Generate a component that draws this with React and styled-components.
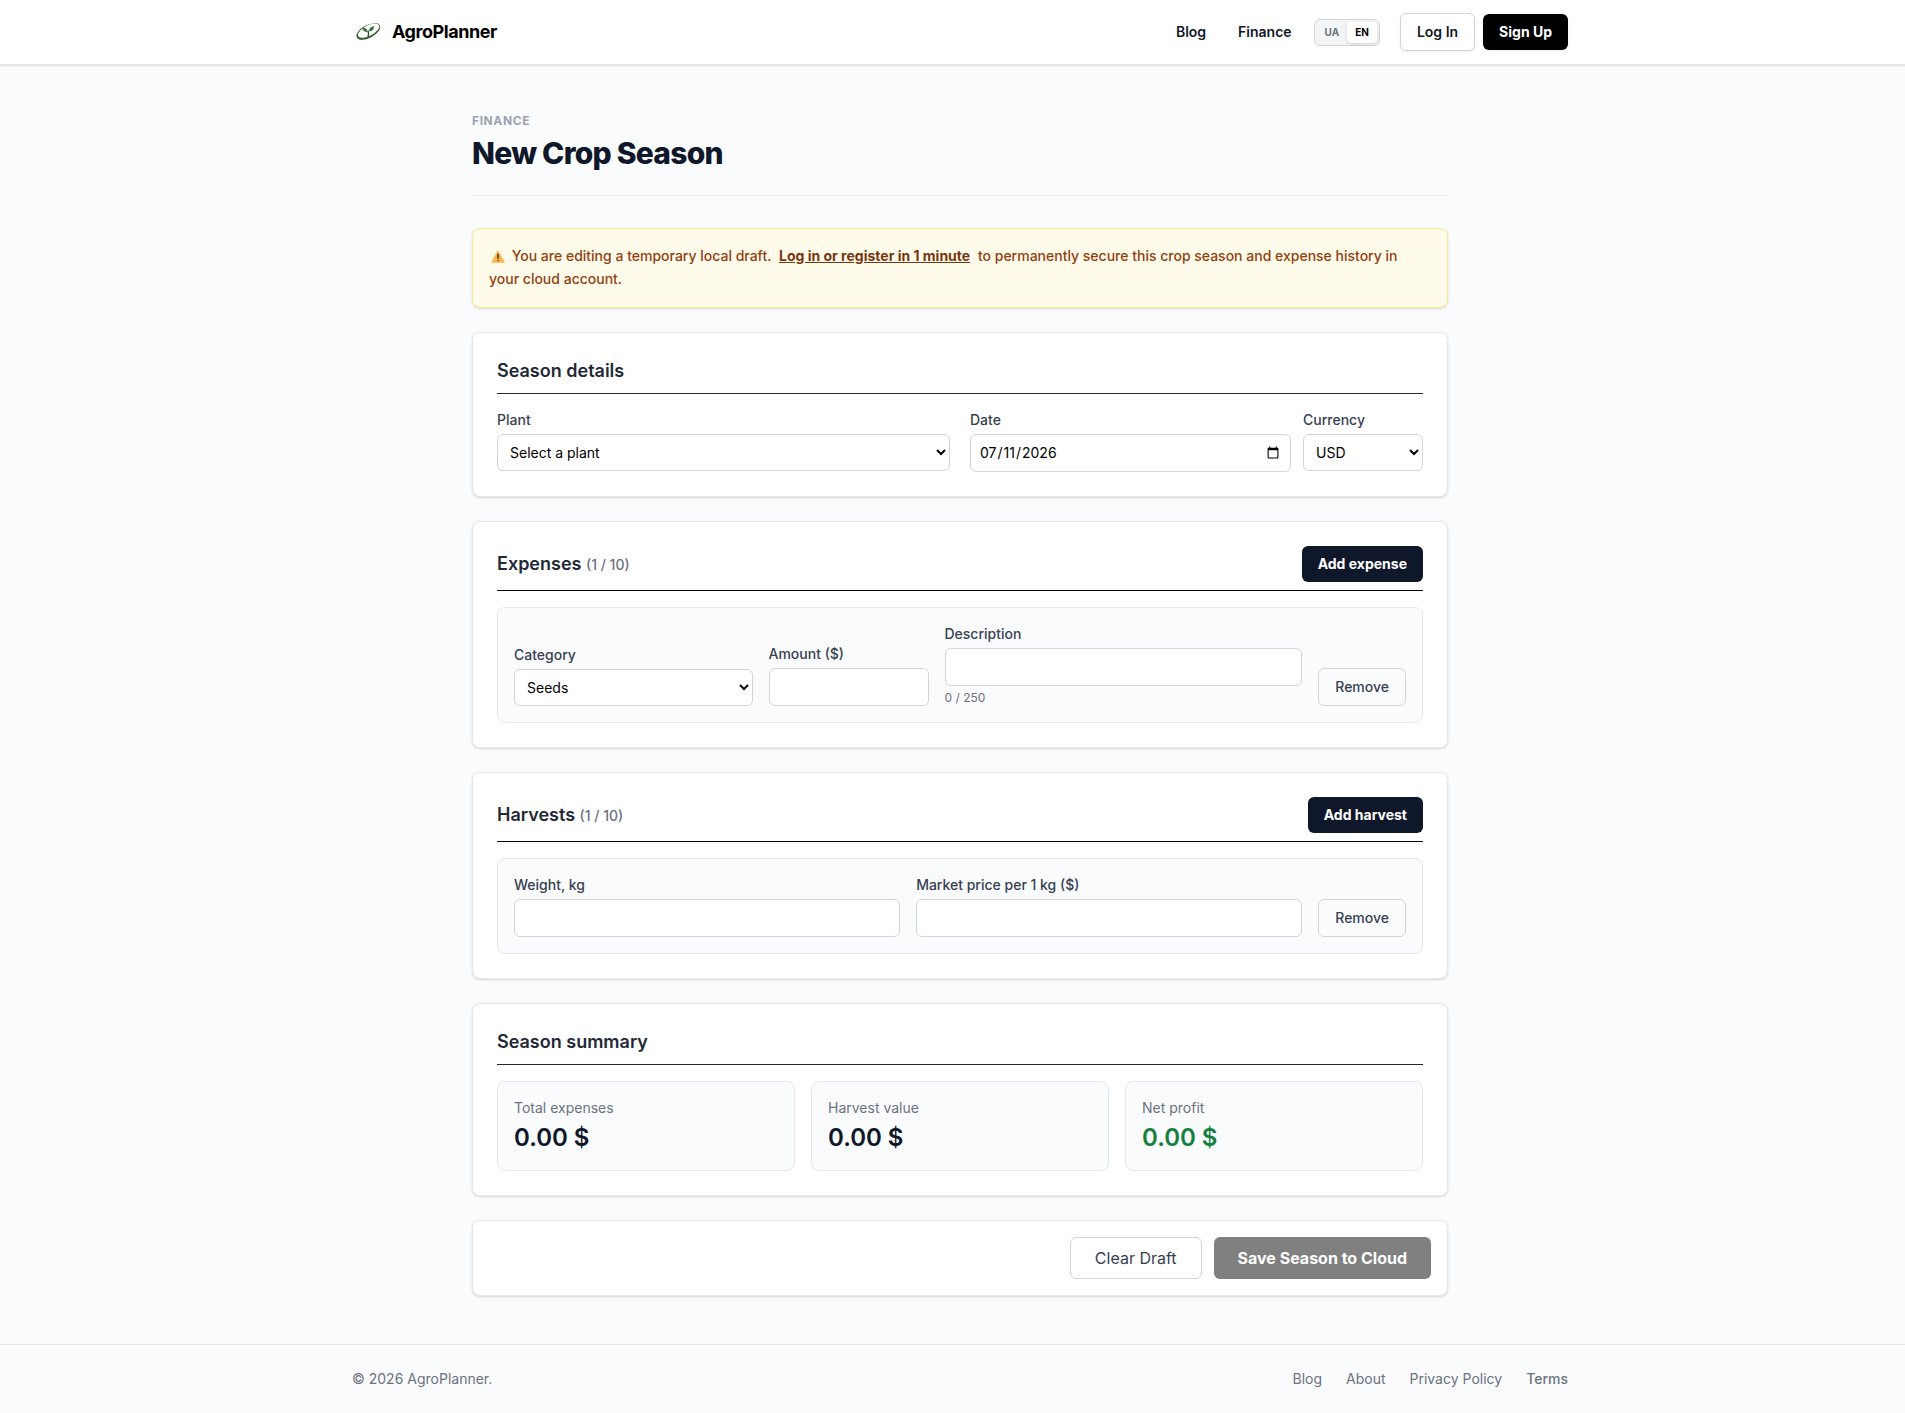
import React, {useState} from 'react'
import styled, {createGlobalStyle, css} from 'styled-components'

const GlobalStyle = createGlobalStyle`
*, *::before, *::after { box-sizing: border-box; }
body {
    margin: 0;
    background: #fafbfd;
    color: #111827;
    font-family: Inter, 'Liberation Sans', sans-serif;
    font-size: 14px;
    line-height: 20px;
}
h1, h2, p { margin: 0; }
button, input, select { font: inherit; }
`

const shadow = css`
box-shadow: 0 1px 3px rgba(0, 0, 0, 0.1), 0 1px 2px rgba(0, 0, 0, 0.06);
`

const gutter = css`
padding-left: 15px;
`

const Bar = styled.header`
${gutter}
background: #fff;
border-bottom: 1px solid #e5e7eb;
box-shadow: 0 1px 1px rgba(0, 0, 0, 0.1);
`
const Wide = styled.div`
display: flex;
align-items: center;
justify-content: space-between;
max-width: 1280px;
margin: 0 auto;
padding: 0 32px;
`
const BarInner = styled(Wide)`
height: 64px;
`
const Brand = styled.a`
display: flex;
align-items: center;
gap: 8px;
color: #000;
font-size: 18px;
font-weight: 700;
letter-spacing: -0.025em;
text-decoration: none;
`
const Nav = styled.nav`
display: flex;
align-items: center;
`
const NavLink = styled.a`
margin-right: ${({$last}) => ($last ? '22px' : '32px')};
color: #111827;
font-weight: 600;
text-decoration: none;
`
const Toggle = styled.div`
display: flex;
align-items: center;
height: 27px;
margin-right: 20px;
padding: 2px;
background: #f3f4f6;
border: 1px solid #d1d5db;
border-radius: 6px;
`
const Lang = styled.button`
height: 21px;
padding: 0 8px;
border: 0;
border-radius: 4px;
background: ${({$on}) => ($on ? '#fff' : 'transparent')};
box-shadow: ${({$on}) => ($on ? '0 1px 3px rgba(0, 0, 0, 0.15)' : 'none')};
color: ${({$on}) => ($on ? '#000' : '#6b7280')};
font-size: 10px;
font-weight: 700;
line-height: 15px;
`
const AuthButton = styled.button`
height: ${({$dark}) => ($dark ? '36px' : '38px')};
margin-left: ${({$dark}) => ($dark ? '8px' : '0')};
padding: 0 16px;
border: ${({$dark}) => ($dark ? '0' : '1px solid #d1d5db')};
border-radius: 6px;
background: ${({$dark}) => ($dark ? '#000' : '#fff')};
box-shadow: 0 1px 2px rgba(0, 0, 0, 0.08);
color: ${({$dark}) => ($dark ? '#fff' : '#111827')};
font-weight: ${({$dark}) => ($dark ? 700 : 600)};
`

const Main = styled.main`
${gutter}
`
const Column = styled.div`
display: flex;
flex-direction: column;
gap: 24px;
max-width: 1024px;
margin: 0 auto;
padding: 48px 24px;
`
const PageHead = styled.div`
margin-bottom: 8px;
padding-bottom: 24px;
border-bottom: 1px solid #eceef1;
`
const Eyebrow = styled.p`
color: #9ca3af;
font-size: 12px;
font-weight: 700;
letter-spacing: 0.05em;
line-height: 16px;
text-transform: uppercase;
`
const Title = styled.h1`
margin-top: 6px;
color: #0f172a;
font-size: 30px;
font-weight: 800;
letter-spacing: -0.025em;
line-height: 36px;
`
const Notice = styled.p`
padding: 15px 16px 17px;
border: 1px solid #fde68a;
border-radius: 8px;
background: #fffbeb;
${shadow}
color: #92400e;
font-weight: 500;
line-height: 23px;

svg {
    margin: 0 3px 0 2px;
    vertical-align: -2px;
}
`
const NoticeLink = styled.a`
margin: 0 4px;
color: #78350f;
font-weight: 700;
`

const Card = styled.section`
padding: 24px;
border: 1px solid #e5e7eb;
border-radius: 8px;
background: #fff;
${shadow}
`
const CardHead = styled.div`
display: flex;
align-items: center;
justify-content: space-between;
margin-bottom: 16px;
padding-bottom: 8px;
border-bottom: 1px solid ${({$strong}) => ($strong ? '#000' : '#1f2937')};
`
const CardTitle = styled.h2`
color: #1f2937;
font-size: 18px;
font-weight: 600;
line-height: 28px;
`
const Count = styled.span`
color: #6b7280;
font-size: 14px;
font-weight: 500;
`
const AddButton = styled.button`
height: 36px;
padding: 0 16px;
border: 0;
border-radius: 6px;
background: #0f172a;
color: #fff;
font-weight: 700;
`

const Halves = styled.div`
display: grid;
grid-template-columns: 1fr 1fr;
gap: 20px;
`
const DateRow = styled.div`
display: grid;
grid-template-columns: 1fr 120px;
gap: 12px;
`
const Panel = styled.div`
display: grid;
grid-template-columns: ${({$cols}) => $cols};
align-items: end;
gap: 16px;
padding: 16px;
border: 1px solid #e5e7eb;
border-radius: 8px;
background: #fafbfd;
`
const Field = styled.label`
display: flex;
flex-direction: column;
gap: 4px;
color: #374151;
font-weight: 500;
`
const control = css`
width: 100%;
border: 1px solid #d1d5db;
border-radius: 6px;
background: #fff;
color: #000;
font-weight: 400;
`
const Input = styled.input`
${control}
height: 38px;
padding: 8px;
`
const Select = styled.select`
${control}
height: 37px;
padding: 8px;
`
const Hint = styled.span`
color: #6b7280;
font-size: 12px;
font-weight: 400;
line-height: 16px;
`
const RemoveButton = styled.button`
height: 38px;
padding: 0 16px;
border: 1px solid #d1d5db;
border-radius: 6px;
background: transparent;
color: #374151;
font-weight: 500;
`

const Stats = styled.div`
display: grid;
grid-template-columns: repeat(3, 1fr);
gap: 16px;
`
const Stat = styled.div`
padding: 16px;
border: 1px solid #e5e7eb;
border-radius: 8px;
background: #fafbfd;
`
const StatLabel = styled.p`
color: #6b7280;
`
const StatValue = styled.p`
margin-top: 4px;
color: ${({$profit}) => ($profit ? '#15803d' : '#0f172a')};
font-size: 24px;
font-weight: 600;
line-height: 32px;
`

const Actions = styled(Card)`
display: flex;
justify-content: flex-end;
gap: 12px;
padding: 16px;
`
const ActionButton = styled.button`
height: 42px;
padding: 0 24px;
border: ${({$primary}) => ($primary ? '0' : '1px solid #d1d5db')};
border-radius: 6px;
background: ${({$primary}) => ($primary ? '#808080' : '#fff')};
color: ${({$primary}) => ($primary ? '#fff' : '#374151')};
font-size: 16px;
font-weight: ${({$primary}) => ($primary ? 700 : 400)};
`

const Footer = styled.footer`
${gutter}
border-top: 1px solid #e5e7eb;
color: #6b7280;
`
const FooterInner = styled(Wide)`
padding-top: 24px;
padding-bottom: 24px;
`
const FooterLinks = styled.nav`
display: flex;
gap: 24px;
`
const FooterLink = styled.a`
color: inherit;
font-weight: ${({$strong}) => ($strong ? 500 : 400)};
text-decoration: none;
`

const Logo = () => (
    <svg width="32" height="32" viewBox="0 0 32 32" aria-hidden="true">
        <g transform="rotate(-28 16.300 15.500)">
            {/* ring: two offset ellipses, heavier at the lower left */}
            <path fillRule="evenodd" fill="#35602f" d="M3.300 15.500a13 6.500 0 1 0 26 0a13 6.500 0 1 0-26 0zM5.300 14.900a11.700 5.300 0 1 0 23.400 0a11.700 5.300 0 1 0-23.400 0z" />
        </g>
        <path fill="#3d7436" d="M15.700 16.200c-3 .1-5.100-1.400-5.700-4.600 3.400-.1 5.500 1.500 5.700 4.600zM16.900 15.200c.1-3 1.900-4.800 5.300-5-.2 3.300-2 5.100-5.300 5z" />
        <path fill="none" stroke="#2b5128" strokeWidth="1.400" strokeLinecap="round" d="M16.200 15.300c.5 1.600.4 3.300-.1 5" />
    </svg>
)

const Warning = () => (
    <svg width="14" height="13" viewBox="0 0 14 13" aria-hidden="true">
        <path fill="#fdb44b" stroke="#fdb44b" strokeLinejoin="round" d="M7 1l6.300 11.200H.7z" />
        <path stroke="#4a3a28" strokeWidth="1.600" strokeLinecap="round" d="M7 4.500v3.600M7 10.500v.1" />
    </svg>
)

const App = () => {
    const [lang, setLang] = useState('EN')
    const [description, setDescription] = useState('')

    return (
        <>
            <GlobalStyle />
            <Bar>
                <BarInner>
                    <Brand href="#"><Logo />AgroPlanner</Brand>
                    <Nav>
                        <NavLink href="#blog">Blog</NavLink>
                        <NavLink href="#finance" $last>Finance</NavLink>
                        <Toggle>
                            {['UA', 'EN'].map(code => (
                                <Lang key={code} type="button" $on={lang === code} onClick={() => setLang(code)}>{code}</Lang>
                            ))}
                        </Toggle>
                        <AuthButton type="button">Log In</AuthButton>
                        <AuthButton type="button" $dark>Sign Up</AuthButton>
                    </Nav>
                </BarInner>
            </Bar>

            <Main>
                <Column>
                    <PageHead>
                        <Eyebrow>Finance</Eyebrow>
                        <Title>New Crop Season</Title>
                    </PageHead>

                    <Notice>
                        <Warning /> You are editing a temporary local draft. <NoticeLink href="#login">Log in or register in 1 minute</NoticeLink> to permanently secure this crop season and expense history in your cloud account.
                    </Notice>

                    <Card>
                        <CardHead>
                            <CardTitle>Season details</CardTitle>
                        </CardHead>
                        <Halves>
                            <Field>
                                Plant
                                <Select><option>Select a plant</option></Select>
                            </Field>
                            <DateRow>
                                <Field>
                                    Date
                                    <Input type="date" defaultValue="2026-07-11" />
                                </Field>
                                <Field>
                                    Currency
                                    <Select><option>USD</option></Select>
                                </Field>
                            </DateRow>
                        </Halves>
                    </Card>

                    <Card>
                        <CardHead $strong>
                            <CardTitle>Expenses <Count>(1 / 10)</Count></CardTitle>
                            <AddButton type="button">Add expense</AddButton>
                        </CardHead>
                        <Panel $cols="2fr 160px 3fr auto">
                            <Field>
                                Category
                                <Select><option>Seeds</option></Select>
                            </Field>
                            <Field>
                                Amount ($)
                                <Input type="text" inputMode="decimal" />
                            </Field>
                            <Field>
                                Description
                                <Input type="text" maxLength={250} value={description} onChange={e => setDescription(e.target.value)} />
                                <Hint>{description.length} / 250</Hint>
                            </Field>
                            <RemoveButton type="button">Remove</RemoveButton>
                        </Panel>
                    </Card>

                    <Card>
                        <CardHead $strong>
                            <CardTitle>Harvests <Count>(1 / 10)</Count></CardTitle>
                            <AddButton type="button">Add harvest</AddButton>
                        </CardHead>
                        <Panel $cols="1fr 1fr auto">
                            <Field>
                                Weight, kg
                                <Input type="text" inputMode="decimal" />
                            </Field>
                            <Field>
                                Market price per 1 kg ($)
                                <Input type="text" inputMode="decimal" />
                            </Field>
                            <RemoveButton type="button">Remove</RemoveButton>
                        </Panel>
                    </Card>

                    <Card>
                        <CardHead>
                            <CardTitle>Season summary</CardTitle>
                        </CardHead>
                        <Stats>
                            <Stat>
                                <StatLabel>Total expenses</StatLabel>
                                <StatValue>0.00 $</StatValue>
                            </Stat>
                            <Stat>
                                <StatLabel>Harvest value</StatLabel>
                                <StatValue>0.00 $</StatValue>
                            </Stat>
                            <Stat>
                                <StatLabel>Net profit</StatLabel>
                                <StatValue $profit>0.00 $</StatValue>
                            </Stat>
                        </Stats>
                    </Card>

                    <Actions>
                        <ActionButton type="button">Clear Draft</ActionButton>
                        <ActionButton type="button" $primary>Save Season to Cloud</ActionButton>
                    </Actions>
                </Column>
            </Main>

            <Footer>
                <FooterInner>
                    <span>© 2026 AgroPlanner.</span>
                    <FooterLinks>
                        <FooterLink href="#blog">Blog</FooterLink>
                        <FooterLink href="#about">About</FooterLink>
                        <FooterLink href="#privacy">Privacy Policy</FooterLink>
                        <FooterLink href="#terms" $strong>Terms</FooterLink>
                    </FooterLinks>
                </FooterInner>
            </Footer>
        </>
    )
}

export default App
